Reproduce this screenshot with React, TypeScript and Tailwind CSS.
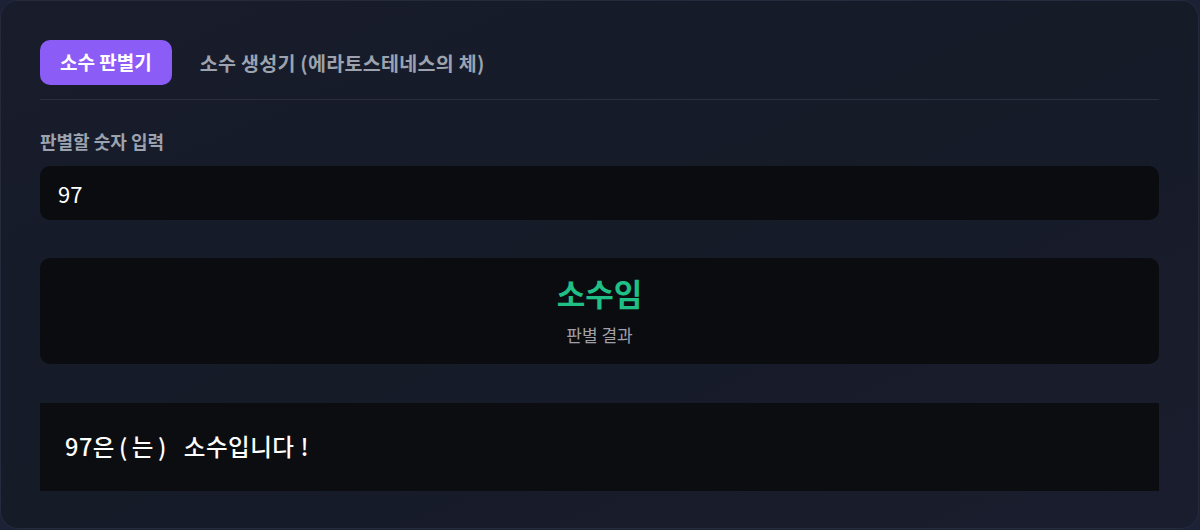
import { useState } from 'react';

const font = "font-['Noto_Sans_CJK_KR','Noto_Sans',sans-serif]";

const App = () => {
    const [tab, setTab] = useState<'check' | 'sieve'>('check');
    const [value, setValue] = useState('97');

    return (
        <div className={`h-[530px] w-[1200px] bg-[#1d2136] ${font}`}>
            <div className="h-[529px] w-[1199px] rounded-[18px] border border-[#252a3c] bg-gradient-to-br from-[#181c2b] via-[#161b28] to-[#1a1d2d] px-[39px] pt-[39px]">
                {/* Tabs */}
                <div className="flex gap-2 border-b border-[#2a2e3f] pb-[14px]">
                    <button
                        onClick={() => setTab('check')}
                        className={`h-[45px] rounded-[10px] px-5 text-[19px] font-bold ${
                            tab === 'check' ? 'bg-[#8b5cf6] text-white' : 'text-[#9ca3af]'
                        }`}
                    >
                        소수 판별기
                    </button>
                    <button
                        onClick={() => setTab('sieve')}
                        className={`h-[45px] rounded-[10px] px-5 text-[19.5px] font-bold tracking-[0.3px] ${
                            tab === 'sieve' ? 'bg-[#8b5cf6] text-white' : 'text-[#9ca3af]'
                        }`}
                    >
                        소수 생성기 (에라토스테네스의 체)
                    </button>
                </div>

                {/* Input */}
                <label className="mt-[29px] block text-[18px] font-bold leading-6 text-[#9ca3af]">판별할 숫자 입력</label>
                <input
                    value={value}
                    onChange={(e) => setValue(e.target.value)}
                    className="mt-[13px] block h-[54px] w-full rounded-[10px] bg-[#0b0c10] px-[18px] text-[22px] text-white outline-none"
                />

                {/* Result */}
                <div className="mt-[38px] flex h-[106px] flex-col items-center justify-center rounded-[10px] bg-[#0b0c10]">
                    <div className="text-[31px] font-bold leading-9 text-[#1fbf86]">소수임</div>
                    <div className="mt-3 text-[17px] leading-6 text-[#a1a1aa]">판별 결과</div>
                </div>

                {/* Message */}
                <div className="mt-[39px] flex h-[88px] items-center bg-[#0c0d11] px-[25px] text-[23.5px] font-medium tracking-[0.5px] text-white">
                    97은<span className="mx-[4px]">(</span>는<span className="ml-[4px] mr-[17px]">)</span>소수입니다<span className="ml-[6px]">!</span>
                </div>
            </div>
        </div>
    );
};

export default App;
